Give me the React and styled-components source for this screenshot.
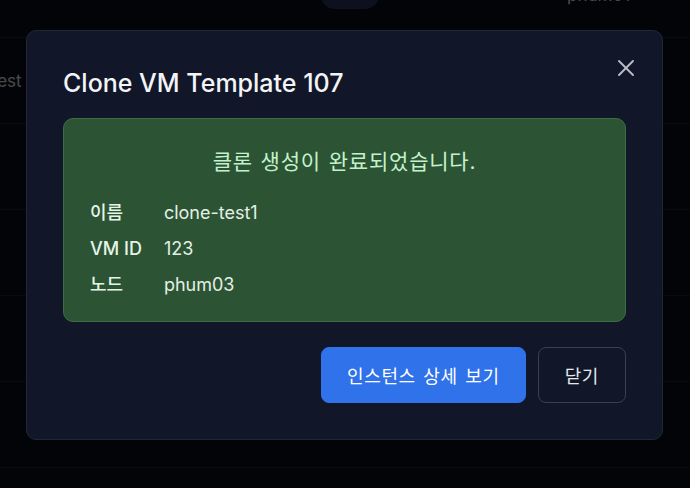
import styled, { createGlobalStyle } from 'styled-components';
import { X } from 'lucide-react';

const GlobalStyle = createGlobalStyle`
  * { box-sizing: border-box; }
  html, body { margin: 0; padding: 0; height: 100%; }
  body {
    background: #0b0d14;
    font-family: Inter, "Noto Sans CJK KR", "Noto Sans", sans-serif;
    overflow: hidden;
  }
`;

const Page = styled.div`
  width: 690px;
  height: 488px;
  overflow: hidden;
  position: relative;
`;

const Table = styled.div`
  margin-top: -48px;
  margin-left: -60px;
  width: 800px;
`;

const Row = styled.div`
  display: grid;
  grid-template-columns: 300px 220px 1fr;
  align-items: center;
  height: 86px;
  border-bottom: 1px solid #1c2230;
  color: #d1d5db;
  font-size: 17px;
`;

const NameCell = styled.div`
  padding-left: 0;
`;

const TypeCell = styled.div`
  display: flex;
  justify-content: center;
`;

const Badge = styled.span`
  display: inline-flex;
  align-items: center;
  justify-content: center;
  width: 58px;
  height: 28px;
  border-radius: 14px;
  background: #23305a;
  color: #7f8aa6;
  font-size: 15px;
  font-weight: 600;
`;

const NodeCell = styled.div`
  padding-left: 107px;
`;

const Overlay = styled.div`
  position: fixed;
  inset: 0;
  background: rgba(0, 0, 0, 0.65);
`;

const Modal = styled.div`
  position: fixed;
  top: 30px;
  left: 26px;
  width: 637px;
  padding: 36px;
  background: #111729;
  border: 1px solid #1f2738;
  border-radius: 10px;
  color: #f3f4f6;
`;

const Title = styled.h2`
  margin: 0 0 19px;
  font-size: 25px;
  line-height: 32px;
  font-weight: 500;
`;

const CloseIcon = styled.button`
  position: absolute;
  top: 23px;
  right: 22px;
  display: flex;
  padding: 0;
  border: none;
  background: none;
  color: #b8bcc6;
  cursor: pointer;
`;

const SuccessBox = styled.div`
  padding: 28px 26px 22px;
  background: #2c5434;
  border: 1px solid #3b6f43;
  border-radius: 10px;
`;

const Message = styled.p`
  margin: 0 0 22px;
  text-align: center;
  font-size: 21px;
  line-height: 30px;
  color: #c4f2cd;
  letter-spacing: 0.8px;
  word-spacing: 1px;
`;

const InfoGrid = styled.dl`
  margin: 0;
  display: grid;
  grid-template-columns: auto 1fr;
  column-gap: 22px;
  row-gap: 8px;
  font-size: 18px;
  line-height: 28px;
`;

const Label = styled.dt`
  color: #e6f4e8;
  font-weight: 500;
`;

const Value = styled.dd`
  margin: 0;
  color: #e3f0e5;
`;

const Actions = styled.div`
  display: flex;
  justify-content: flex-end;
  gap: 12px;
  margin-top: 25px;
`;

const Button = styled.button`
  height: 56px;
  padding: 0 ${({ $primary }) => ($primary ? '25px' : '26px')};
  border-radius: 8px;
  font-family: inherit;
  font-size: 18px;
  letter-spacing: 0.6px;
  word-spacing: 2px;
  cursor: pointer;
  color: ${({ $primary }) => ($primary ? '#ffffff' : '#e5e7eb')};
  background: ${({ $primary }) => ($primary ? '#2f72ea' : 'transparent')};
  border: 1px solid ${({ $primary }) => ($primary ? '#2f72ea' : '#384152')};
`;

const rows = [
  { name: 'web', node: 'phum01' },
  { name: 'clone-test', node: 'phum01' },
  { name: 'db', node: 'phum02' },
  { name: 'app', node: 'phum02' },
  { name: 'vm', node: 'phum03' },
  { name: 'tpl', node: 'phum03' },
];

export default function App() {
  return (
    <Page>
      <GlobalStyle />
      <Table>
        {rows.map((r) => (
          <Row key={r.name}>
            <NameCell>{r.name}</NameCell>
            <TypeCell>
              <Badge>VM</Badge>
            </TypeCell>
            <NodeCell>{r.node}</NodeCell>
          </Row>
        ))}
      </Table>
      <Overlay />
      <Modal>
        <Title>Clone VM Template 107</Title>
        <CloseIcon aria-label="닫기">
          <X size={28} strokeWidth={1.6} />
        </CloseIcon>
        <SuccessBox>
          <Message>클론 생성이 완료되었습니다.</Message>
          <InfoGrid>
            <Label>이름</Label>
            <Value>clone-test1</Value>
            <Label>VM ID</Label>
            <Value>123</Value>
            <Label>노드</Label>
            <Value>phum03</Value>
          </InfoGrid>
        </SuccessBox>
        <Actions>
          <Button $primary>인스턴스 상세 보기</Button>
          <Button>닫기</Button>
        </Actions>
      </Modal>
    </Page>
  );
}
